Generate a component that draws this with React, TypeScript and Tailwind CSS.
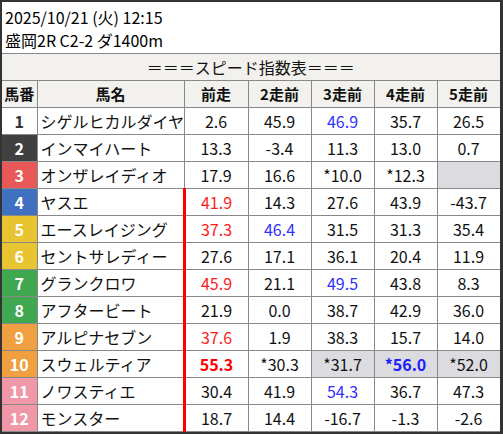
import React from 'react';

type Row = {
  no: number;
  name: string;
  vals: string[];
  bg: string;
  fg: string;
};

// 枠色
const ROWS: Row[] = [
  { no: 1, name: 'シゲルヒカルダイヤ', vals: ['2.6', '45.9', '46.9', '35.7', '26.5'], bg: 'bg-white', fg: 'text-[#333]' },
  { no: 2, name: 'インマイハート', vals: ['13.3', '-3.4', '11.3', '13.0', '0.7'], bg: 'bg-[#404040]', fg: 'text-white' },
  { no: 3, name: 'オンザレイディオ', vals: ['17.9', '16.6', '*10.0', '*12.3', ''], bg: 'bg-[#e85858]', fg: 'text-white' },
  { no: 4, name: 'ヤスエ', vals: ['41.9', '14.3', '27.6', '43.9', '-43.7'], bg: 'bg-[#4070c0]', fg: 'text-white' },
  { no: 5, name: 'エースレイジング', vals: ['37.3', '46.4', '31.5', '31.3', '35.4'], bg: 'bg-[#e8c430]', fg: 'text-white' },
  { no: 6, name: 'セントサレディー', vals: ['27.6', '17.1', '36.1', '20.4', '11.9'], bg: 'bg-[#e8c430]', fg: 'text-white' },
  { no: 7, name: 'グランクロワ', vals: ['45.9', '21.1', '49.5', '43.8', '8.3'], bg: 'bg-[#40a850]', fg: 'text-white' },
  { no: 8, name: 'アフタービート', vals: ['21.9', '0.0', '38.7', '42.9', '36.0'], bg: 'bg-[#40a850]', fg: 'text-white' },
  { no: 9, name: 'アルピナセブン', vals: ['37.6', '1.9', '38.3', '15.7', '14.0'], bg: 'bg-[#f0a040]', fg: 'text-white' },
  { no: 10, name: 'スウェルティア', vals: ['55.3', '*30.3', '*31.7', '*56.0', '*52.0'], bg: 'bg-[#f0a040]', fg: 'text-white' },
  { no: 11, name: 'ノワスティエ', vals: ['30.4', '41.9', '54.3', '36.7', '47.3'], bg: 'bg-[#f098a8]', fg: 'text-white' },
  { no: 12, name: 'モンスター', vals: ['18.7', '14.4', '-16.7', '-1.3', '-2.6'], bg: 'bg-[#f098a8]', fg: 'text-white' },
];

// セルごとの装飾 [row-col]
const RED = new Set(['4-0', '5-0', '7-0', '9-0']);
const BLUE = new Set(['1-2', '5-1', '7-2', '11-2']);
const BOLD_RED = new Set(['10-0']);
const BOLD_BLUE = new Set(['10-3']);
const SHADED = new Set(['3-4', '10-2', '10-3', '10-4']);

const HEADS = ['前走', '2走前', '3走前', '4走前', '5走前'];

function valClass(no: number, c: number) {
  const k = `${no}-${c}`;
  if (BOLD_RED.has(k)) return 'text-[#ff0000] font-bold';
  if (BOLD_BLUE.has(k)) return 'text-[#2020ff] font-bold';
  if (RED.has(k)) return 'text-[#ff1a1a]';
  if (BLUE.has(k)) return 'text-[#3030ff]';
  return 'text-[#111]';
}

export default function App() {
  return (
    <div
      className="w-[503px] h-[434px] border-2 border-r-[3px] border-[#333] bg-white overflow-hidden text-[#111]"
      style={{ fontFamily: '"Noto Sans CJK JP", "Noto Sans", sans-serif' }}
    >
      {/* タイトル */}
      <div className="pl-[3px] pt-[4px] pb-[1px] text-[16px] leading-[23px] text-black">
        <div>2025/10/21 (火) 12:15</div>
        <div>盛岡2R C2-2 ダ1400m</div>
      </div>

      <table className="w-[498px] table-fixed border-collapse text-[16px]">
        <colgroup>
          <col className="w-[35px]" />
          <col className="w-[147px]" />
          <col className="w-[64px]" />
          <col className="w-[63px]" />
          <col className="w-[63px]" />
          <col className="w-[63px]" />
          <col className="w-[63px]" />
        </colgroup>
        <thead>
          <tr className="h-[27px] bg-[#f2f1ed]">
            <th colSpan={7} className="border border-[#888] border-l-0 font-normal text-center leading-[20px]">
              ＝＝＝スピード指数表＝＝＝
            </th>
          </tr>
          <tr className="h-[27px] bg-[#f2f1ed]">
            <th className="border border-[#888] border-l-0 font-bold text-[15px] leading-[20px]">馬番</th>
            <th className="border border-[#888] font-bold text-[15px] leading-[20px]">馬名</th>
            {HEADS.map((h) => (
              <th key={h} className="border border-[#888] font-bold text-[15px] leading-[20px]">{h}</th>
            ))}
          </tr>
        </thead>
        <tbody>
          {ROWS.map((r) => (
            <tr key={r.no} className="h-[27px]">
              <td className={`border border-[#888] border-l-0 text-center font-bold leading-[20px] ${r.bg} ${r.fg}`}>{r.no}</td>
              <td className="border border-[#888] pl-[3px] leading-[20px] whitespace-nowrap overflow-hidden">{r.name}</td>
              {r.vals.map((v, c) => (
                <td
                  key={c}
                  className={`border border-[#888] text-center leading-[20px] ${
                    c === 0 && r.no >= 4 ? 'border-l-[3px] border-l-[#ff0000]' : ''
                  } ${SHADED.has(`${r.no}-${c}`) ? 'bg-[#dcdce0]' : 'bg-white'} ${valClass(r.no, c)}`}
                >
                  {v}
                </td>
              ))}
            </tr>
          ))}
        </tbody>
      </table>
    </div>
  );
}
